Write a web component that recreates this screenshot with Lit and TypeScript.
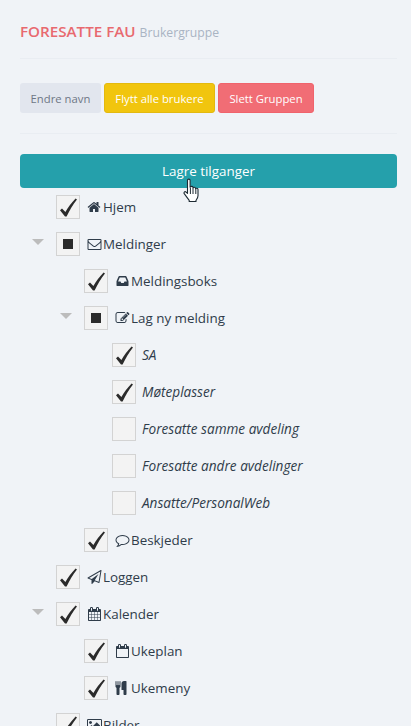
import { LitElement, html, css, svg } from "lit";
import { customElement } from "lit/decorators.js";

const ICONS: Record<string, string> = {
  home: "M1408 992v480q0 26-19 45t-45 19h-384v-384h-256v384h-384q-26 0-45-19t-19-45v-480q0-1 .5-3t.5-3l575-474 575 474q1 2 1 6zm223-69l-62 74q-8 9-21 11h-3q-13 0-21-7l-692-577-692 577q-12 8-24 7-13-2-21-11l-62-74q-8-10-7-23.5t11-21.5l719-599q32-26 76-26t76 26l244 204v-195q0-14 9-23t23-9h192q14 0 23 9t9 23v408l219 182q10 8 11 21.5t-7 23.5z",
  envelope: "M1664 1504v-768q-32 36-69 66-268 206-426 338-51 43-83 67t-86.5 48.5-102.5 24.5h-2q-48 0-102.5-24.5t-86.5-48.5-83-67q-158-132-426-338-37-30-69-66v768q0 13 9.5 22.5t22.5 9.5h1472q13 0 22.5-9.5t9.5-22.5zm0-1051v-24.5l-.5-13-3-12.5-5.5-9-9-7.5-14-2.5h-1472q-13 0-22.5 9.5t-9.5 22.5q0 168 147 284 193 152 401 317 6 5 35 29.5t46 37.5 44.5 31.5 50.5 27.5 43 9h2q20 0 43-9t50.5-27.5 44.5-31.5 46-37.5 35-29.5q208-165 401-317 54-43 100.5-115.5t46.5-131.5zm128-37v1088q0 66-47 113t-113 47h-1472q-66 0-113-47t-47-113v-1088q0-66 47-113t113-47h1472q66 0 113 47t47 113z",
  inbox: "M1151 960h316q-1-3-2.5-8.5t-2.5-7.5l-212-496h-708l-212 496q-1 2-2.5 7.5t-2.5 8.5h316l95 192h320zm513 30v482q0 26-19 45t-45 19h-1408q-26 0-45-19t-19-45v-482q0-62 25-123l238-552q10-25 36.5-42t52.5-17h832q26 0 52.5 17t36.5 42l238 552q25 61 25 123z",
  edit: "M888 1184l116-116-152-152-116 116v56h96v96h56zm440-720q-16-16-33 1l-350 350q-17 17-1 33t33-1l350-350q17-17 1-33zm80 594v190q0 119-84.5 203.5t-203.5 84.5h-832q-119 0-203.5-84.5t-84.5-203.5v-832q0-119 84.5-203.5t203.5-84.5h832q63 0 117 25 15 7 18 23 3 17-9 29l-49 49q-14 14-32 8-23-6-45-6h-832q-66 0-113 47t-47 113v832q0 66 47 113t113 47h832q66 0 113-47t47-113v-126q0-13 9-22l64-64q15-15 35-7t20 29zm-96-738l288 288-672 672h-288v-288zm444 132l-92 92-288-288 92-92q28-28 68-28t68 28l152 152q28 28 28 68t-28 68z",
  comment: "M896 384q-204 0-381.5 69.5t-282 187.5-104.5 255q0 112 71.5 213.5t201.5 175.5l87 50-27 96q-24 91-70 172 152-63 275-171l43-38 57 6q69 8 130 8 204 0 381.5-69.5t282-187.5 104.5-255-104.5-255-282-187.5-381.5-69.5zm896 512q0 174-120 321.5t-326 233-450 85.5q-70 0-145-8-198 175-460 242-49 14-114 22h-5q-15 0-27-10.5t-16-27.5v-1q-3-4-.5-12t2-10 4.5-9.5l6-9 7-8.5 8-9q7-8 31-34.5t34.5-38 31-39.5 32.5-51 27-59 26-76q-157-89-247.5-220t-90.5-281q0-174 120-321.5t326-233 450-85.5 450 85.5 326 233 120 321.5z",
  plane: "M1764 11q33 24 27 64l-256 1536q-5 29-32 45-14 8-31 8-11 0-24-5l-527-215-298 327q-18 21-47 21-14 0-23-4-19-7-30-23.5t-11-36.5v-452l-472-193q-37-14-40-55-3-39 32-59l1664-960q35-21 68 2zm-342 1499l221-1323-1434 827 336 137 863-639-478 797z",
  calendar: "M192 1664h288v-288h-288v288zm352 0h320v-288h-320v288zm-352-352h288v-320h-288v320zm352 0h320v-320h-320v320zm-352-384h288v-288h-288v288zm736 736h320v-288h-320v288zm-384-736h320v-288h-320v288zm768 736h288v-288h-288v288zm-384-352h320v-320h-320v320zm-352-864v-288q0-13-9.5-22.5t-22.5-9.5h-64q-13 0-22.5 9.5t-9.5 22.5v288q0 13 9.5 22.5t22.5 9.5h64q13 0 22.5-9.5t9.5-22.5zm736 864h288v-320h-288v320zm-384-384h320v-288h-320v288zm384 0h288v-288h-288v288zm32-480v-288q0-13-9.5-22.5t-22.5-9.5h-64q-13 0-22.5 9.5t-9.5 22.5v288q0 13 9.5 22.5t22.5 9.5h64q13 0 22.5-9.5t9.5-22.5zm384-64v1280q0 52-38 90t-90 38h-1408q-52 0-90-38t-38-90v-1280q0-52 38-90t90-38h128v-96q0-66 47-113t113-47h64q66 0 113 47t47 113v96h384v-96q0-66 47-113t113-47h64q66 0 113 47t47 113v96h128q52 0 90 38t38 90z",
  calendarO: "M192 1664h1408v-1024h-1408v1024zm384-1216v-288q0-14-9-23t-23-9h-64q-14 0-23 9t-9 23v288q0 14 9 23t23 9h64q14 0 23-9t9-23zm768 0v-288q0-14-9-23t-23-9h-64q-14 0-23 9t-9 23v288q0 14 9 23t23 9h64q14 0 23-9t9-23zm384-64v1280q0 52-38 90t-90 38h-1408q-52 0-90-38t-38-90v-1280q0-52 38-90t90-38h128v-96q0-66 47-113t113-47h64q66 0 113 47t47 113v96h384v-96q0-66 47-113t113-47h64q66 0 113 47t47 113v96h128q52 0 90 38t38 90z",
  cutlery: "M640 64v640q0 61-35.5 111t-92.5 70v779q0 52-38 90t-90 38h-128q-52 0-90-38t-38-90v-779q-57-20-92.5-70t-35.5-111v-640q0-26 19-45t45-19 45 19 19 45v416q0 26 19 45t45 19 45-19 19-45v-416q0-26 19-45t45-19 45 19 19 45v416q0 26 19 45t45 19 45-19 19-45v-416q0-26 19-45t45-19 45 19 19 45zm768 0v1600q0 52-38 90t-90 38h-128q-52 0-90-38t-38-90v-512h-224q-13 0-22.5-9.5t-9.5-22.5v-800q0-132 94-226t226-94h256q26 0 45 19t19 45z",
  picture: "M576 576q0 80-56 136t-136 56-136-56-56-136 56-136 136-56 136 56 56 136zm1024 384v448h-1408v-192l320-320 160 160 512-512zm96-704h-1600q-13 0-22.5 9.5t-9.5 22.5v1216q0 13 9.5 22.5t22.5 9.5h1600q13 0 22.5-9.5t9.5-22.5v-1216q0-13-9.5-22.5t-22.5-9.5zm160 32v1216q0 66-47 113t-113 47h-1600q-66 0-113-47t-47-113v-1216q0-66 47-113t113-47h1600q66 0 113 47t47 113z",
};

type Row = { label: string; level: number; state: "on" | "off" | "mixed"; icon?: string; arrow?: boolean };

const ROWS: Row[] = [
  { label: "Hjem", level: 0, state: "on", icon: "home" },
  { label: "Meldinger", level: 0, state: "mixed", icon: "envelope", arrow: true },
  { label: "Meldingsboks", level: 1, state: "on", icon: "inbox" },
  { label: "Lag ny melding", level: 1, state: "mixed", icon: "edit", arrow: true },
  { label: "SA", level: 2, state: "on" },
  { label: "Møteplasser", level: 2, state: "on" },
  { label: "Foresatte samme avdeling", level: 2, state: "off" },
  { label: "Foresatte andre avdelinger", level: 2, state: "off" },
  { label: "Ansatte/PersonalWeb", level: 2, state: "off" },
  { label: "Beskjeder", level: 1, state: "on", icon: "comment" },
  { label: "Loggen", level: 0, state: "on", icon: "plane" },
  { label: "Kalender", level: 0, state: "on", icon: "calendar", arrow: true },
  { label: "Ukeplan", level: 1, state: "on", icon: "calendarO" },
  { label: "Ukemeny", level: 1, state: "on", icon: "cutlery" },
  { label: "Bilder", level: 0, state: "on", icon: "picture" },
];

@customElement("app-root")
export class AppRoot extends LitElement {
  static styles = css`
    :host {
      display: block;
      position: relative;
      height: 726px;
      overflow: hidden;
      background: #f0f3f7;
      font-family: "Open Sans", "Noto Sans", sans-serif;
      color: #2f3c4a;
    }
    .page { padding: 0 14px 0 20px; }
    .head {
      height: 59px;
      box-sizing: border-box;
      padding-top: 21px;
      border-bottom: 1px solid #e9edf2;
      display: flex;
      align-items: baseline;
      gap: 4px;
      line-height: 20px;
    }
    .title { font-size: 15.2px; font-weight: 600; color: #e8696f; white-space: nowrap; }
    .sub { font-size: 12.2px; color: #a9b4c3; white-space: nowrap; }
    .actions {
      display: flex;
      gap: 3px;
      padding: 24px 0 20px;
      border-bottom: 1px solid #e9edf2;
    }
    .btn {
      height: 30px;
      box-sizing: border-box;
      border: 1px solid transparent;
      border-radius: 3px;
      font: inherit;
      font-size: 11.3px;
      padding: 0;
      display: flex;
      align-items: center;
      justify-content: center;
    }
    .grey { width: 81px; background: #e2e6ee; color: #6e7785; }
    .yellow { width: 111px; background: #f1c50e; border-color: #e3b90f; color: #fff; }
    .red { width: 96px; background: #f16d75; border-color: #f0636c; color: #fff; }
    .save {
      display: flex;
      align-items: center;
      justify-content: center;
      width: 100%;
      height: 34px;
      margin-top: 20px;
      border: none;
      border-radius: 4px;
      background: #25a0ab;
      color: #fff;
      font: inherit;
      font-size: 13.4px;
    }
    .row { display: flex; align-items: center; height: 37px; }
    .l0 { padding-left: 12px; }
    .l1 { padding-left: 40px; }
    .l2 { padding-left: 68px; }
    .arrow-cell { width: 24px; flex: none; display: flex; align-items: center; }
    .arrow {
      width: 0;
      height: 0;
      margin-top: -4px;
      border-left: 6px solid transparent;
      border-right: 6px solid transparent;
      border-top: 6px solid #bcbcbc;
    }
    .box {
      width: 24px;
      height: 24px;
      box-sizing: border-box;
      flex: none;
      border: 1px solid #d3d3d3;
      background: #f3f3f3;
      display: flex;
      align-items: center;
      justify-content: center;
    }
    .box svg { display: block; }
    .square { width: 10px; height: 10px; background: #2b2b2b; }
    .icon { flex: none; width: 15px; height: 14px; margin-left: 7px; margin-right: 1px; fill: #2f3c4a; display: block; }
    .label { font-size: 13.4px; white-space: nowrap; margin-left: 0; }
    .label.plain { font-size: 13.6px; font-style: italic; margin-left: 6px; }
    .hand { position: absolute; left: 182px; top: 178px; }
  `;

  private check() {
    return html`<svg width="22" height="22" viewBox="0 0 22 22">
      <path d="M3 14.2 L5 12.4 L8.4 16.1 C11 11 14.6 6.6 18.6 2.4 L20 3.4 C15.8 8.6 12.4 14.4 9.6 20.6 L8 20.6 Z" fill="#2b2b2b"></path>
    </svg>`;
  }

  private renderRow(r: Row) {
    return html`<div class="row l${r.level}">
      <span class="arrow-cell">${r.arrow ? html`<span class="arrow"></span>` : ""}</span>
      <span class="box">
        ${r.state === "on" ? this.check() : r.state === "mixed" ? html`<span class="square"></span>` : ""}
      </span>
      ${r.icon
        ? html`<svg class="icon" viewBox="0 0 1792 1792">${svg`<path d=${ICONS[r.icon]}></path>`}</svg>`
        : ""}
      <span class="label ${r.icon ? "" : "plain"}">${r.label}</span>
    </div>`;
  }

  render() {
    return html`
      <div class="page">
        <div class="head">
          <span class="title">FORESATTE FAU</span>
          <span class="sub">Brukergruppe</span>
        </div>
        <div class="actions">
          <div class="btn grey">Endre navn</div>
          <div class="btn yellow">Flytt alle brukere</div>
          <div class="btn red">Slett Gruppen</div>
        </div>
        <div class="save">Lagre tilganger</div>
        <div class="tree">${ROWS.map((r) => this.renderRow(r))}</div>
      </div>
      <svg class="hand" width="20" height="25" viewBox="0 0 20 25">
        <path d="M5.5 2.2c0-1.5 2.6-1.5 2.6 0v7l.4-.1c.2-1 2.2-1.1 2.4.1l.2.6c.4-.9 2.2-.8 2.4.3l.1.6c.6-.8 2.3-.6 2.4.8v6.2c0 2-1 3.2-2 4.6v1.2H7.2v-1.2c-1.4-1.6-3-4-5-6.6-.9-1.2.6-2.7 1.9-1.6l1.4 1.3z" fill="#fff" stroke="#1d2a33" stroke-width="1.1" stroke-linejoin="round"></path>
        <path d="M8.4 10v6M11 10v6M13.8 10.500v5.500" stroke="#1d2a33" stroke-width="1" fill="none"></path>
      </svg>
    `;
  }
}
